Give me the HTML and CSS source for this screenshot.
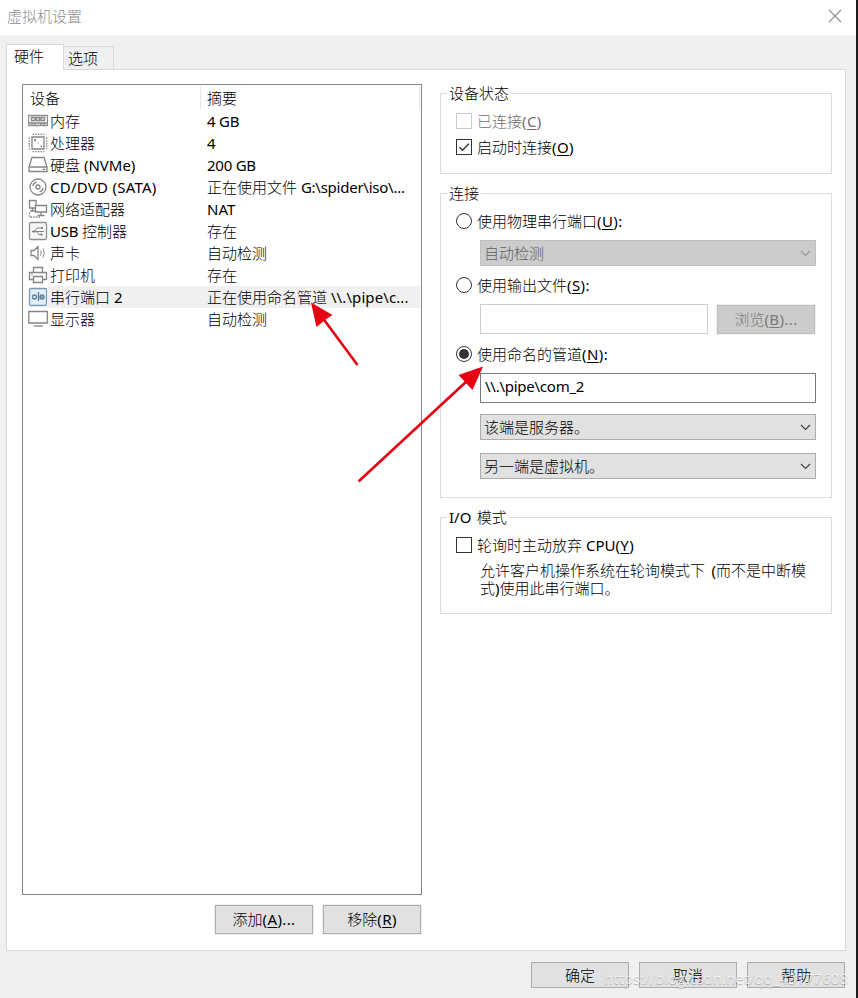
FILE: index.html
```html
<!DOCTYPE html>
<html lang="zh-CN">
<head>
<meta charset="utf-8">
<title>虚拟机设置</title>
<link rel="stylesheet" href="styles.css">
</head>
<body>
<div class="window">
  <header class="titlebar">
    <span>虚拟机设置</span>
    <svg class="close" width="14" height="14" viewBox="0 0 14 14"><path d="M1 1L13 13M13 1L1 13"/></svg>
  </header>
  <nav class="tabs">
    <div class="tab active">硬件</div>
    <div class="tab">选项</div>
  </nav>
  <main class="panel">
    <section class="left">
      <div class="list">
        <div class="head"><span>设备</span><span>摘要</span></div>
        <div class="row">
          <svg class="ico" viewBox="0 0 20 20"><path class="pale" d="M.500 4.500h19v10h-19z"/><path d="M3.500 6.500h3.500v3H3.500zM8.500 6.500h3v3h-3zM13 6.500h3.500v3H13zM1 12h18M4 12v2.500M7 12v2.500M13 12v2.500M16 12v2.500"/></svg>
          <span class="name">内存</span><span class="sum en narrow">4 GB</span>
        </div>
        <div class="row">
          <svg class="ico" viewBox="0 0 20 20"><path d="M4 4h12v12H4z"/><path class="dash" d="M4.500 1.300h12M4.500 18.700h12M1.300 4.500v12M18.700 4.500v12"/><path class="dot" d="M6 6h2v2H6zM12.500 12.500H14V14h-1.500zM9.500 9.500h1v1h-1z"/></svg>
          <span class="name">处理器</span><span class="sum en">4</span>
        </div>
        <div class="row">
          <svg class="ico" viewBox="0 0 20 20"><path d="M1 12L4 2.500h12L19 12v4.500H1zM1 12h18M14.500 14.300h2.500"/></svg>
          <span class="name">硬盘 <span class="en">(NVMe)</span></span><span class="sum en narrow">200 GB</span>
        </div>
        <div class="row">
          <svg class="ico" viewBox="0 0 20 20"><circle cx="10" cy="10" r="8"/><circle cx="10" cy="10" r="2"/><path d="M4.800 9Q5.500 6 8.500 5.200M15.200 11Q14.500 14 11.500 14.800"/></svg>
          <span class="name en wide">CD/DVD (SATA)</span><span class="sum">正在使用文件 <span class="en narrow">G:\spider\iso\...</span></span>
        </div>
        <div class="row">
          <svg class="ico" viewBox="0 0 20 20"><path d="M8 6.500V1.500H1.500v7.500H7M4.500 9v2.500M2 12h5M7.500 6.500h11V13h-11zM13 13v3M9.500 16.500h7"/><path class="dash" d="M1.500 13.500v4.500H13"/></svg>
          <span class="name">网络适配器</span><span class="sum en">NAT</span>
        </div>
        <div class="row">
          <svg class="ico" viewBox="0 0 20 20"><rect class="pale" x="1.500" y="1.500" width="17" height="17" rx="1.500"/><path class="thin" d="M4 10.500h12M6.500 10.500l2.500-3.500h5M8.500 10.500l2 3h3"/><path class="dot" d="M3.500 10.500L6.500 8.800v3.400zM13 6h2v2h-2zM12.500 12.500h2v2h-2z"/></svg>
          <span class="name"><span class="en narrow">USB</span> 控制器</span><span class="sum">存在</span>
        </div>
        <div class="row">
          <svg class="ico" viewBox="0 0 20 20"><path d="M3 7.500h3l4-4v13l-4-4H3z"/><path class="thin" d="M12.500 7.500q1.500 2.500 0 5M15 5.500q2.800 4.500 0 9"/></svg>
          <span class="name">声卡</span><span class="sum">自动检测</span>
        </div>
        <div class="row">
          <svg class="ico" viewBox="0 0 20 20"><path d="M5.500 7.500V2.500h9v5M5 14.500H1.500v-7h17v7H15M5.500 11.500h9v6h-9zM3.500 9.500h1"/></svg>
          <span class="name">打印机</span><span class="sum">存在</span>
        </div>
        <div class="row selected">
          <svg class="ico blue" viewBox="0 0 20 20"><rect class="fill" x="1.500" y="1.500" width="17" height="17" rx="1.500"/><path d="M10.500 5v9"/><circle cx="6.500" cy="10" r="2"/><circle cx="14" cy="10" r="2"/><path d="M12.500 10h3"/></svg>
          <span class="name">串行端口 <span class="en">2</span></span><span class="sum">正在使用命名管道 <span class="en pipe">\\.\pipe\c...</span></span>
        </div>
        <div class="row">
          <svg class="ico" viewBox="0 0 20 20"><path d="M.800 2.500h18.500V14H.800z"/><path d="M5.500 17h9.500"/></svg>
          <span class="name">显示器</span><span class="sum">自动检测</span>
        </div>
      </div>
      <div class="actions">
        <div class="btn">添加<span class="key">(<u>A</u>)...</span></div>
        <div class="btn">移除<span class="key">(<u>R</u>)</span></div>
      </div>
    </section>
    <section class="right">
      <fieldset class="status">
        <legend>设备状态</legend>
        <div class="opt off"><i class="check"></i>已连接<span class="key">(<u>C</u>)</span></div>
        <div class="opt"><i class="check"><svg width="14" height="14" viewBox="0 0 14 14"><path d="M2.500 7.200L5.500 10.200L11.800 3.800"/></svg></i>启动时连接<span class="key">(<u>O</u>)</span></div>
      </fieldset>
      <fieldset class="conn">
        <legend>连接</legend>
        <div class="opt"><i class="radio"></i>使用物理串行端口<span class="key">(<u>U</u>):</span></div>
        <div class="select off">自动检测<svg width="11" height="7" viewBox="0 0 11 7"><path d="M1 1L5.500 5.500L10 1"/></svg></div>
        <div class="opt"><i class="radio"></i>使用输出文件<span class="key">(<u>S</u>):</span></div>
        <div class="file"><div class="input off"></div><div class="btn off">浏览<span class="key">(<u>B</u>)...</span></div></div>
        <div class="opt named"><i class="radio on"></i>使用命名的管道<span class="key">(<u>N</u>):</span></div>
        <div class="input en narrow">\\.\pipe\com_2</div>
        <div class="select server">该端是服务器。<svg width="11" height="7" viewBox="0 0 11 7"><path d="M1 1L5.500 5.500L10 1"/></svg></div>
        <div class="select peer">另一端是虚拟机。<svg width="11" height="7" viewBox="0 0 11 7"><path d="M1 1L5.500 5.500L10 1"/></svg></div>
      </fieldset>
      <fieldset class="io">
        <legend><span class="en">I/O</span> 模式</legend>
        <div class="opt"><i class="check"></i><span>轮询时主动放弃 <span class="en">CPU</span></span><span class="key">(<u>Y</u>)</span></div>
        <p>允许客户机操作系统在轮询模式下 <span class="en">(</span>而不是中断模<br>式<span class="en">)</span>使用此串行端口。</p>
      </fieldset>
    </section>
  </main>
  <footer class="footer">
    <div class="btn">确定</div>
    <div class="btn">取消</div>
    <div class="btn">帮助</div>
  </footer>
  <svg class="arrows" width="858" height="998" viewBox="0 0 858 998">
    <path d="M357.500 365L322 317M358.500 481.500L468 380"/>
    <polygon points="311,302.500 332.500,315 325,320 316.500,327"/>
    <polygon points="483,366.500 458.500,375 472.500,390"/>
  </svg>
  <div class="watermark">https://blog.csdn.net/qq_43177608</div>
</div>
</body>
</html>
```
FILE: styles.css
```css
* { box-sizing: border-box; }
body {
  margin: 0;
  font: 300 15px/22px "Noto Sans", "Noto Sans CJK SC", sans-serif;
  color: #000;
  background: #1c1c1e;
}
.window {
  position: relative;
  width: 858px;
  height: 998px;
  overflow: hidden;
  background: #f0f0f0;
  border-right: 2px solid #1c1c1e;
  white-space: nowrap;
}
u { text-decoration-thickness: 1px; text-underline-offset: 2px; text-decoration-skip-ink: none; }
.en, .key { font-weight: 400; }
.key { letter-spacing: .4px; }
.narrow { letter-spacing: -.25px; }
.wide { letter-spacing: .25px; }
.pipe { letter-spacing: .1px; }
.titlebar {
  display: flex;
  align-items: center;
  justify-content: space-between;
  height: 35px;
  padding: 0 14px 3px 7px;
  background: #fff;
  color: #8c8c8c;
}
.close { fill: none; stroke: #8c8c8c; stroke-width: 1.1; }
.tabs { display: flex; align-items: flex-end; height: 35px; padding-left: 6px; }
.tab {
  width: 50px;
  height: 24px;
  padding-left: 4px;
  border: 1px solid #d9d9d9;
  border-left: 0;
}
.tab.active {
  position: relative;
  width: 58px;
  height: 26px;
  padding-left: 7px;
  line-height: 23px;
  border-left: 1px solid #d9d9d9;
  border-bottom: 0;
  background: #fff;
}
.panel {
  display: flex;
  gap: 18px;
  width: 840px;
  height: 882px;
  margin: -1px 0 0 6px;
  padding: 14px 0 0 15px;
  border: 1px solid #d9d9d9;
  background: #fff;
}
.left { width: 400px; }
.list { height: 811px; padding-right: 1px; border: 1px solid #828790; }
.head { display: flex; height: 25px; padding: 1px 0 1px 7px; }
.head span:first-child { width: 170px; }
.head span:last-child {
  flex: 1;
  padding-left: 6px;
  border: solid #e5e5e5;
  border-width: 0 1px;
}
.head span { line-height: 24px; }
.row { display: flex; align-items: center; height: 22px; }
.ico {
  flex: none;
  width: 20px;
  height: 20px;
  margin: 0 0 0 5px;
  fill: none;
  stroke: #858585;
  stroke-width: 1.3;
}
.ico .pale { stroke: #909090; fill: #f7f7f7; }
.ico .dash { stroke-dasharray: 1.5 1.2; }
.ico .dot { fill: #858585; stroke: none; }
.ico .thin { stroke-width: 1; }
.ico.blue { stroke: #557e9e; }
.ico.blue .fill { fill: #e3eef6; stroke: #779bb5; }
.name { width: 157px; padding-left: 2px; }
.sum { flex: 1; padding-left: 2px; }
.selected .name, .selected .sum { background: #f0f0f0; }
.actions { display: flex; justify-content: flex-end; gap: 10px; padding: 10px 1px 0 0; }
.btn {
  width: 98px;
  height: 29px;
  line-height: 27px;
  text-align: center;
  border: 1px solid #adadad;
  background: #e1e1e1;
  box-shadow: 0 0 0 1px #f0f0f0;
}
.btn.off { color: #787878; background: #ccc; border-color: #bfbfbf; }
.right { width: 392px; }
fieldset { margin: 0; padding: 0; border: 1px solid #dcdcdc; min-width: 0; }
legend { height: 19px; line-height: 19px; margin-left: 6px; padding: 0 2px; word-spacing: 1.5px; }
.status { height: 90px; }
.conn { height: 314px; margin-top: 10px; }
.io { height: 106px; margin-top: 10px; }
.opt { display: flex; align-items: center; height: 22px; margin: 8px 0 0 15px; }
legend + .opt { margin-top: 7px; }
.status .opt + .opt { margin-top: 4px; }
.opt.named { margin-top: 9px; }
.opt.off { color: #6d6d6d; }
.check, .radio {
  flex: none;
  width: 16px;
  height: 16px;
  margin-right: 5px;
  border: 1px solid #333;
  background: #fff;
}
.check svg { display: block; fill: none; stroke: #333; stroke-width: 1.4; }
.off .check { border-color: #ccc; }
.radio { border-radius: 50%; }
.radio.on { padding: 2px; background: #333 content-box; }
.select, .input {
  width: 336px;
  margin: 8px 0 0 39px;
  padding-left: 4px;
}
.select {
  display: flex;
  align-items: center;
  justify-content: space-between;
  height: 26px;
  padding: 0 4px 0 3px;
  border: 1px solid #adadad;
  background: #e1e1e1;
}
.select svg { fill: none; stroke: #404040; stroke-width: 1.2; }
.select.off { color: #606060; background: #ccc; border-color: #bfbfbf; }
.select.off svg { stroke: #999; }
.select.server { margin-top: 11px; }
.select.peer { margin-top: 13px; }
.input { height: 30px; line-height: 24px; border: 1px solid #7a7a7a; background: #fff; }
.file { display: flex; gap: 9px; padding: 8px 0 0 39px; }
.file .input { width: 228px; margin: 0; border-color: #ccc; }
.file .btn { margin-top: 1px; }
.io p { margin: 5px 0 0 39px; line-height: 18px; word-spacing: 2.5px; }
.footer { display: flex; justify-content: flex-end; gap: 10px; padding: 11px 11px 0 0; }
.footer .btn { height: 26px; line-height: 24px; box-shadow: none; }
.arrows { position: absolute; left: 0; top: 0; fill: #e60012; }
.arrows path { stroke: #e60012; stroke-width: 2.6; }
.watermark {
  position: absolute;
  left: 604px;
  top: 967px;
  font: 15px/22px "Open Sans", sans-serif;
  color: rgba(255, 255, 255, .72);
  text-shadow: 0 1px 1px rgba(0, 0, 0, .25);
}
```
